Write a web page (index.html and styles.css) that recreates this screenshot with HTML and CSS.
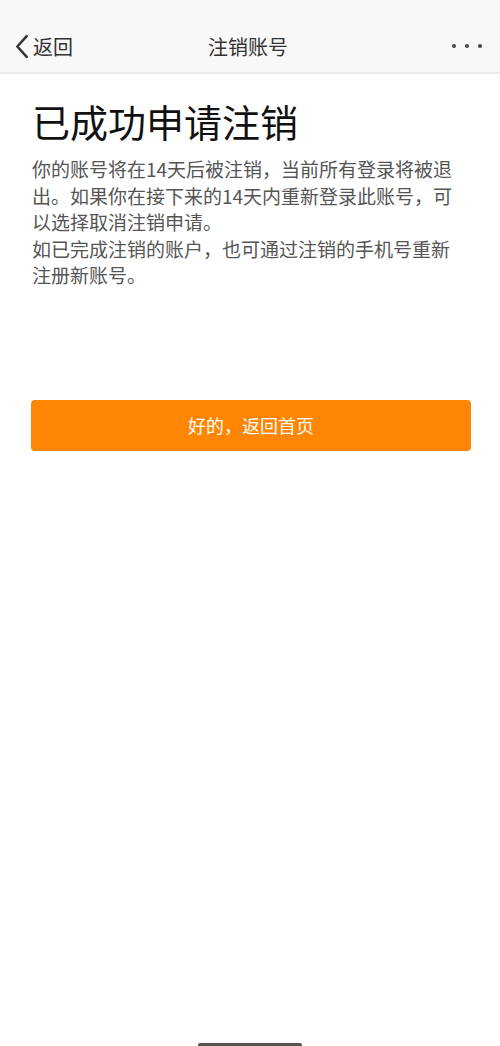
FILE: index.html
```html
<!DOCTYPE html>
<html lang="zh-CN">
<head>
    <meta charset="UTF-8">
    <meta name="viewport" content="width=device-width, initial-scale=1.0">
    <title>注销账号</title>
    <link rel="stylesheet" href="styles.css">
</head>
<body>
    <header class="nav-bar">
        <a class="nav-back" href="#">
            <svg class="back-icon" viewBox="0 0 14 24" width="15" height="25">
                <path d="M12 2 L3 12 L12 22" fill="none" stroke="#333" stroke-width="2.4" stroke-linecap="round" stroke-linejoin="round"/>
            </svg>
            <span>返回</span>
        </a>
        <div class="nav-title">注销账号</div>
        <div class="nav-more">
            <i></i><i></i><i></i>
        </div>
    </header>
    <main class="content">
        <h1 class="title">已成功申请注销</h1>
        <p class="desc">你的账号将在14天后被注销，当前所有登录将被退出。如果你在接下来的14天内重新登录此账号，可以选择取消注销申请。</p>
        <p class="desc">如已完成注销的账户，也可通过注销的手机号重新注册新账号。</p>
        <button class="btn-home">好的，返回首页</button>
    </main>
    <div class="home-bar"></div>
</body>
</html>
```

FILE: styles.css
```css
html, body {
    margin: 0;
    padding: 0;
    height: 100%;
}
body {
    font-family: "Noto Sans CJK SC", "Noto Sans", sans-serif;
    background-color: #fff;
    position: relative;
    overflow: hidden;
}
.nav-bar {
    height: 74px;
    box-sizing: border-box;
    padding: 20px 18px 0 14px;
    background-color: #f8f8f8;
    border-bottom: 2px solid #ebebeb;
    display: flex;
    align-items: center;
    justify-content: space-between;
}
.nav-back {
    display: flex;
    align-items: center;
    color: #333;
    text-decoration: none;
    font-size: 20px;
    width: 90px;
}
.back-icon {
    margin-right: 4px;
}
.nav-title {
    font-size: 20px;
    color: #333;
}
.nav-more {
    width: 90px;
    display: flex;
    justify-content: flex-end;
    gap: 9px;
    box-sizing: border-box;
}
.nav-more i {
    width: 4px;
    height: 4px;
    border-radius: 50%;
    background-color: #444;
}
.content {
    padding: 21px 32px 0 32px;
}
.title {
    margin: 0 0 9px 0;
    font-size: 38px;
    font-weight: 400;
    line-height: 52px;
    color: #111;
}
.desc {
    margin: 0;
    font-size: 19px;
    line-height: 26.5px;
    color: #555;
}
.btn-home {
    display: block;
    width: 440px;
    margin: 111px 0 0 -1px;
    height: 51px;
    border: none;
    border-radius: 4px;
    background-color: #ff8505;
    color: #fff;
    font-family: inherit;
    font-size: 18px;
}
.home-bar {
    position: absolute;
    left: 198px;
    bottom: 0;
    width: 104px;
    height: 3px;
    background-color: #555;
    border-radius: 2px 2px 0 0;
}
```
